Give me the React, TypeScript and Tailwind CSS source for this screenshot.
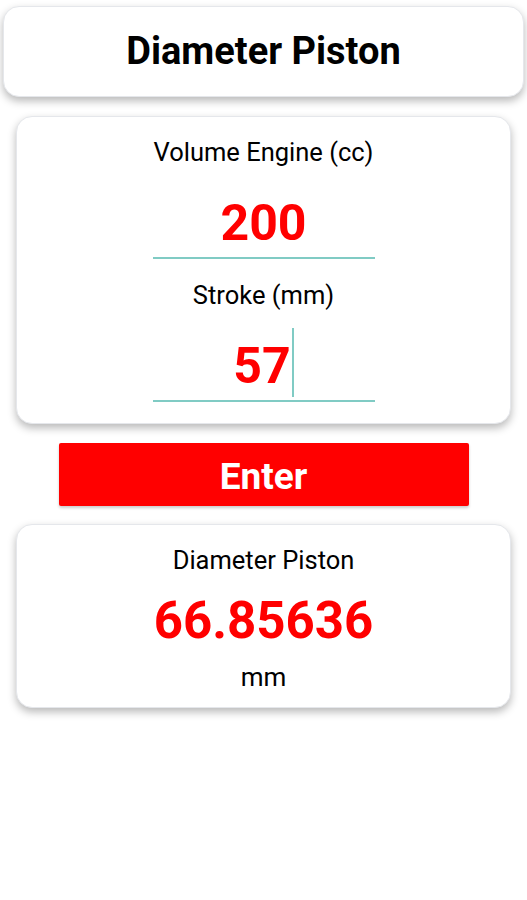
import { FC } from 'react'

const Card: FC<{ className?: string; children: React.ReactNode }> = ({ className, children }) => (
  <div
    className={`bg-white rounded-[16px] shadow-[0_4px_8px_rgba(0,0,0,0.28)] border border-gray-200 ${className ?? ''}`}
  >
    {children}
  </div>
)

const Field: FC<{ label: string; value: string; cursor?: boolean }> = ({ label, value, cursor }) => (
  <div className="flex flex-col items-center">
    <span className="text-[25.5px] leading-[30px] text-black">{label}</span>
    <div className="w-[222px] h-[92px] pt-[31px] flex items-start justify-center border-b-2 border-[#80cbc4]">
      <span className="text-[50px] font-bold text-[#ff0000] leading-none">{value}</span>
      {cursor && <span className="w-[2px] h-[69px] -mt-[13px] ml-[1px] bg-[#80cbc4]" />}
    </div>
  </div>
)

export default function App() {
  return (
    <div className="w-[527px] h-[900px] bg-white font-['Roboto',sans-serif] overflow-hidden">
      <div className="flex flex-col items-center pt-[6px] px-[3px]">
        <Card className="w-[521px] h-[91px] flex items-center justify-center">
          <h1 className="text-[38px] font-bold text-black">Diameter Piston</h1>
        </Card>

        <Card className="w-[495px] h-[308px] mt-[19px] flex flex-col items-center gap-[21px] pt-[20px]">
          <Field label="Volume Engine (cc)" value="200" />
          <Field label="Stroke (mm)" value="57" cursor />
        </Card>

        <button className="w-[410px] h-[63px] mt-[19px] bg-[#ff0000] rounded-[2px] shadow-[0_2px_3px_rgba(0,0,0,0.2)] text-white text-[37px] font-bold leading-none pt-[3px]">
          Enter
        </button>

        <Card className="w-[495px] h-[184px] mt-[18px] flex flex-col items-center pt-[20px]">
          <span className="text-[25.5px] leading-[30px] text-black">Diameter Piston</span>
          <span className="text-[51px] font-bold text-[#ff0000] leading-none mt-[20px]">66.85636</span>
          <span className="text-[26px] leading-[30px] text-black mt-[16px]">mm</span>
        </Card>
      </div>
    </div>
  )
}
